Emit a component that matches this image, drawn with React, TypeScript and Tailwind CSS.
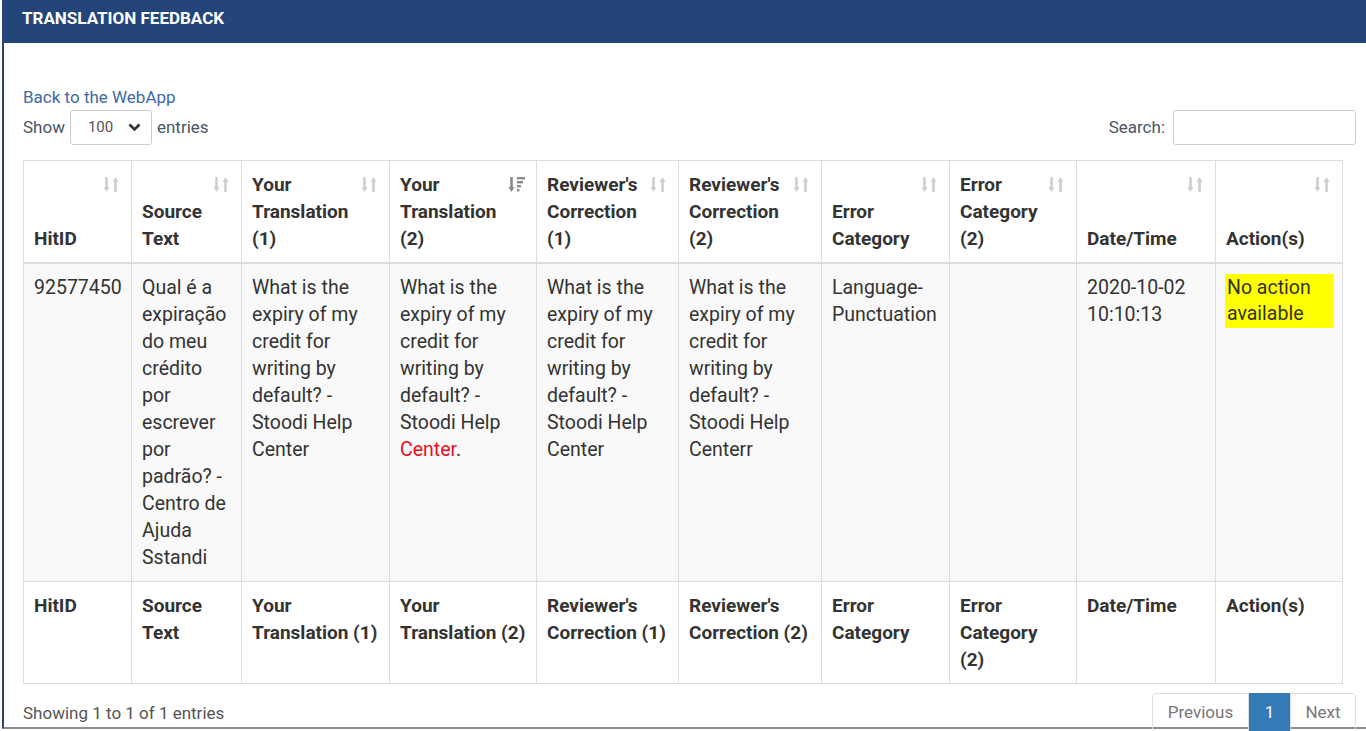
import React from "react";

const cols = [108, 110, 148, 147, 142, 143, 128, 127, 139, 127];

const headers: { label: string; sorted?: boolean; footPr?: string }[] = [
  { label: "HitID" },
  { label: "Source Text" },
  { label: "Your Translation (1)" },
  { label: "Your Translation (2)", sorted: true },
  { label: "Reviewer's Correction (1)" },
  { label: "Reviewer's Correction (2)" },
  { label: "Error Category" },
  { label: "Error Category (2)", footPr: "pr-[20px]" },
  { label: "Date/Time" },
  { label: "Action(s)" },
];

function SortIcon({ sorted }: { sorted?: boolean }) {
  const c = sorted ? "#8a8a8a" : "#cfcfcf";
  return (
    <svg width="18" height="19" viewBox="0 0 18 19" className="absolute right-[10px] top-[14px]">
      {/* down arrow */}
      <path d="M3.5 2v11.5" stroke={c} strokeWidth="2.6" />
      <path d="M0.5 12l3 5 3-5z" fill={c} />
      {sorted ? (
        <g fill={c}>
          <rect x="9" y="2" width="8" height="2.4" />
          <rect x="9" y="6" width="6" height="2.4" />
          <rect x="9" y="10" width="4" height="2.4" />
          <rect x="9" y="14" width="2.4" height="2.4" />
        </g>
      ) : (
        <g>
          <path d="M12.5 5.5v11.5" stroke={c} strokeWidth="2.6" />
          <path d="M9.5 7l3-5 3 5z" fill={c} />
        </g>
      )}
    </svg>
  );
}

const translation = "What is the expiry of my credit for writing by default? - Stoodi Help";

export default function App() {
  return (
    <div className="h-[731px] overflow-hidden bg-white pl-[2px] font-['Roboto',sans-serif]">
      <div className="flex h-[729px] flex-col border-b-2 border-l-2 border-b-[#8c8c8c] border-l-[#23457a]">
        <div className="flex h-[43px] shrink-0 items-start bg-[#23457a] px-[18px] pt-[6px]">
          <h1 className="text-[17px] font-bold uppercase leading-[24px] text-white">Translation Feedback</h1>
        </div>

        <div className="flex flex-col pl-[19px] pr-[10px] pt-[44px] text-[17px] text-[#4b5563]">
          <a href="#" className="leading-[20px] text-[#3f69a3]">
            Back to the WebApp
          </a>
          <div className="mt-[3px] flex items-center justify-between">
            <label className="flex items-center gap-[5px]">
              <span>Show</span>
              <span className="flex h-[35px] w-[82px] items-center justify-between rounded-[3px] border border-[#cccccc] pl-[17px] pr-[10px] text-[15px] text-[#555]">
                100
                <svg width="13" height="9" viewBox="0 0 13 9">
                  <path d="M1.5 1.5l5 5 5-5" fill="none" stroke="#333" strokeWidth="2.6" />
                </svg>
              </span>
              <span>entries</span>
            </label>
            <label className="flex items-center gap-[8px]">
              <span>Search:</span>
              <span className="block h-[35px] w-[183px] rounded-[3px] border border-[#cccccc]" />
            </label>
          </div>

          <table className="mt-[15px] w-[1319px] table-fixed border-collapse text-[19.5px] leading-[27px] text-[#333]">
            <colgroup>
              {cols.map((w, i) => (
                <col key={i} style={{ width: w }} />
              ))}
            </colgroup>
            <thead>
              <tr>
                {headers.map((h) => (
                  <th
                    key={h.label}
                    className="relative border border-b-2 border-[#dddddd] py-[10px] pl-[10px] pr-[30px] text-left align-bottom text-[19px] font-bold"
                  >
                    {h.label}
                    <SortIcon sorted={h.sorted} />
                  </th>
                ))}
              </tr>
            </thead>
            <tbody>
              <tr className="bg-[#f9f9f9]">
                <td className="border border-[#dddddd] p-[10px] align-top">92577450</td>
                <td className="border border-[#dddddd] py-[10px] pl-[10px] pr-[8px] align-top">
                  Qual é a expiração do meu crédito por escrever por padrão? - Centro de Ajuda Sstandi
                </td>
                <td className="border border-[#dddddd] p-[10px] align-top">{translation} Center</td>
                <td className="border border-[#dddddd] p-[10px] align-top">
                  {translation} <span className="text-[#e8101e]">Center</span>.
                </td>
                <td className="border border-[#dddddd] p-[10px] align-top">{translation} Center</td>
                <td className="border border-[#dddddd] p-[10px] align-top">{translation} Centerr</td>
                <td className="border border-[#dddddd] p-[10px] align-top">Language-Punctuation</td>
                <td className="border border-[#dddddd] p-[10px] align-top"></td>
                <td className="border border-[#dddddd] p-[10px] align-top">2020-10-02 10:10:13</td>
                <td className="border border-[#dddddd] py-[10px] pl-[9px] pr-[8px] align-top">
                  <span className="inline-block bg-[#ffff00] py-[1px] pl-[2px] pr-[12px] leading-[26px]">
                    No action available
                  </span>
                </td>
              </tr>
            </tbody>
            <tfoot>
              <tr>
                {headers.map((h) => (
                  <th
                    key={h.label}
                    className={`border border-[#dddddd] py-[10px] pl-[10px] text-left align-top text-[19px] font-bold ${h.footPr ?? "pr-[8px]"}`}
                  >
                    {h.label}
                  </th>
                ))}
              </tr>
            </tfoot>
          </table>

          <div className="mt-[9px] flex items-start justify-between">
            <div className="pt-[8px] text-[17px] text-[#555]">Showing 1 to 1 of 1 entries</div>
            <nav className="flex text-[17px]">
              <span className="flex h-[40px] w-[97px] items-center justify-center rounded-l-[4px] border border-[#dddddd] text-[#777]">
                Previous
              </span>
              <span className="flex h-[40px] w-[41px] items-center justify-center border border-[#337ab7] bg-[#337ab7] text-white">
                1
              </span>
              <span className="flex h-[40px] w-[66px] items-center justify-center rounded-r-[4px] border border-[#dddddd] text-[#777]">
                Next
              </span>
            </nav>
          </div>
        </div>
      </div>
    </div>
  );
}
